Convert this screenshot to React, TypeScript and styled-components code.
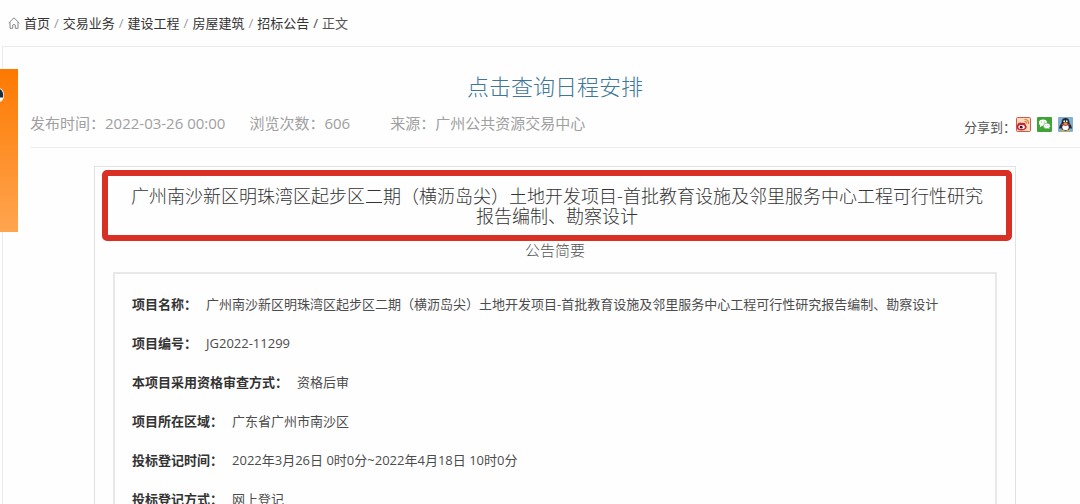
import React from "react";
import styled, { createGlobalStyle } from "styled-components";

const GlobalStyle = createGlobalStyle`
  *, *::before, *::after { box-sizing: border-box; }
  body {
    margin: 0;
    background: #fefefe;
    color: #555;
    font-family: "Open Sans", "Noto Sans CJK SC", sans-serif;
    font-size: 13px;
    overflow: hidden;
  }
`;

const Page = styled.div`
  height: 100vh;
  overflow: hidden;
`;

const Breadcrumb = styled.nav`
  display: flex;
  align-items: center;
  gap: 4px;
  height: 46px;
  padding: 0 8px;
  line-height: 20px;
`;

const Crumb = styled.a`
  color: #333;
  text-decoration: none;
`;

const Slash = styled.span<{ $dark?: boolean }>`
  color: ${(p) => (p.$dark ? "#444" : "#999")};
`;

const Panel = styled.main`
  margin-left: 2px;
  padding: 23px 0 0 27px;
  border: 1px solid #ebebeb;
  border-right: 0;
  min-height: 100vh;
`;

const Title = styled.h1`
  margin: 0;
  text-align: center;
  font-size: 22px;
  font-weight: 300;
  line-height: 32px;
`;

const TitleLink = styled.a`
  color: #3f7799;
  text-decoration: none;
`;

const MetaBar = styled.div`
  display: flex;
  justify-content: space-between;
  align-items: center;
  height: 46px;
  padding: 0 7px 4px 0;
  border-bottom: 1px solid #eee;
`;

const MetaList = styled.div`
  display: flex;
  color: #a0a0a0;
  font-size: 15px;
  line-height: 20px;
`;

const MetaItem = styled.span<{ $gap: number }>`
  margin-right: ${(p) => p.$gap}px;
`;

const Share = styled.div`
  display: flex;
  align-items: center;
  padding-top: 4px;
`;

const ShareLabel = styled.span`
  padding-top: 4px;
  line-height: 20px;
`;

const ShareIcons = styled.div`
  display: flex;
  gap: 6px;
`;

const ShareButton = styled.button`
  display: block;
  width: 15px;
  height: 15px;
  padding: 0;
  border: 0;
  background: none;
  cursor: pointer;
  svg { display: block; }
`;

const Notice = styled.article`
  margin: 18px 64px 0;
  padding: 3px 3px 0 7px;
  border: 1px solid #e2e2e2;
  border-bottom: 0;
`;

const Highlight = styled.div`
  padding: 10px 20px 9px;
  border: 6px solid #d93026;
  border-radius: 5px;
`;

const NoticeTitle = styled.h2`
  margin: 0;
  color: #333;
  text-align: center;
  font-size: 18px;
  font-weight: 300;
  line-height: 20px;
`;

const Subtitle = styled.h3`
  margin: 0;
  padding-right: 4px;
  text-align: center;
  font-size: 15px;
  font-weight: 300;
  line-height: 18px;
`;

const Summary = styled.dl`
  margin: 13px 15px 0 11px;
  padding: 11px 17px;
  border: 2px solid #e8e8e8;
`;

const Row = styled.div`
  display: flex;
  gap: 9px;
  line-height: 39px;
`;

const Term = styled.dt`
  color: #333;
  font-weight: 700;
`;

const Detail = styled.dd`
  margin: 0;
  color: #4c4c4c;
`;

const SideBanner = styled.aside`
  position: fixed;
  top: 69px;
  left: 0;
  width: 18px;
  height: 163px;
  overflow: hidden;
  background: linear-gradient(#fd7900, #ffa550);
`;

const projectName =
  "广州南沙新区明珠湾区起步区二期（横沥岛尖）土地开发项目-首批教育设施及邻里服务中心工程可行性研究报告编制、勘察设计";

const crumbs = ["首页", "交易业务", "建设工程", "房屋建筑", "招标公告"];

const rows = [
  ["项目名称：", projectName],
  ["项目编号：", "JG2022-11299"],
  ["本项目采用资格审查方式：", "资格后审"],
  ["项目所在区域：", "广东省广州市南沙区"],
  ["投标登记时间：", "2022年3月26日 0时0分~2022年4月18日 10时0分"],
  ["投标登记方式：", "网上登记"],
];

const HomeIcon = () => (
  <svg width="12" height="12" viewBox="0 0 12 12" fill="none" stroke="#888" strokeWidth="1" aria-hidden="true">
    <path d="M.7 6 6 .8 11.3 6M2 5v6.3h2.700V8.100Q6 6.600 7.300 8.100v3.200H10V5" />
  </svg>
);

const WeiboIcon = () => (
  <svg width="15" height="15" viewBox="0 0 15 15" aria-hidden="true">
    <rect x=".5" y=".5" width="14" height="14" rx="1" fill="#f8d9b8" stroke="#c95c4e" />
    <path d="M1 8Q3 4.500 6 6 9.500 5.200 9.800 8 12 10.500 9 12.600 6 14.300 2 12.800Q0 11 1 8Z" fill="#ca2636" />
    <ellipse cx="5.600" cy="10" rx="3.200" ry="2" fill="#fff" />
    <circle cx="5.200" cy="10.200" r="1.400" fill="#34171b" />
    <path d="M8.500 2.500Q13 2.500 12.500 7M8.500 4.600Q10.800 4.500 10.600 6.500" fill="none" stroke="#e77938" strokeWidth="1.100" />
  </svg>
);

const WechatIcon = () => (
  <svg width="15" height="15" viewBox="0 0 15 15" aria-hidden="true">
    <rect width="15" height="15" rx="1" fill="#40a337" />
    <path d="m3.300 8-.5 2.200L5 9Z" fill="#fff" />
    <ellipse cx="6" cy="5.800" rx="4" ry="3.300" fill="#fff" />
    <path d="m10.500 11 1.800 1.300-.3-2.300Z" fill="#fff" />
    <ellipse cx="9.800" cy="8.900" rx="3.500" ry="2.800" fill="#fff" stroke="#40a337" strokeWidth=".6" />
    <g fill="#40a337">
      <circle cx="4.700" cy="5" r=".5" /><circle cx="7.200" cy="5" r=".5" />
      <circle cx="8.700" cy="8.300" r=".4" /><circle cx="10.900" cy="8.300" r=".4" />
    </g>
  </svg>
);

const QqIcon = () => (
  <svg width="15" height="15" viewBox="0 0 15 15" aria-hidden="true">
    <rect width="15" height="15" rx="1" fill="#7fb1d0" />
    <path d="M3.500 6Q3.500 1 7.500 1t4 5q3 3.500 2 6l-1.600-1Q11 14 7.500 14T3.100 11l-1.600 1q-1-2.500 2-6Z" fill="#232a37" />
    <ellipse cx="7.500" cy="10.300" rx="3.200" ry="3" fill="#fff" />
    <ellipse cx="6.200" cy="4.300" rx=".8" ry="1.100" fill="#fff" />
    <ellipse cx="8.800" cy="4.300" rx=".8" ry="1.100" fill="#fff" />
    <ellipse cx="7.500" cy="6.300" rx="2.300" ry=".8" fill="#f6a21b" />
    <path d="M3.500 7.300Q7.500 9.300 11.500 7.300" fill="none" stroke="#d93b2d" strokeWidth="1.200" />
    <path d="M3 13.500h3.500M8.500 13.500H12" stroke="#f0a030" strokeWidth="1.300" />
  </svg>
);

export default function App() {
  return (
    <Page>
      <GlobalStyle />
      <Breadcrumb aria-label="当前位置">
        <HomeIcon />
        {crumbs.map((c, i) => (
          <React.Fragment key={c}>
            <Crumb href="#">{c}</Crumb>
            <Slash $dark={i === crumbs.length - 1}>/</Slash>
          </React.Fragment>
        ))}
        <span>正文</span>
      </Breadcrumb>
      <Panel>
        <Title>
          <TitleLink href="#">点击查询日程安排</TitleLink>
        </Title>
        <MetaBar>
          <MetaList>
            <MetaItem $gap={24}>发布时间：2022-03-26 00:00</MetaItem>
            <MetaItem $gap={40}>浏览次数：606</MetaItem>
            <MetaItem $gap={0}>来源：广州公共资源交易中心</MetaItem>
          </MetaList>
          <Share>
            <ShareLabel>分享到：</ShareLabel>
            <ShareIcons>
              <ShareButton type="button" aria-label="微博"><WeiboIcon /></ShareButton>
              <ShareButton type="button" aria-label="微信"><WechatIcon /></ShareButton>
              <ShareButton type="button" aria-label="QQ"><QqIcon /></ShareButton>
            </ShareIcons>
          </Share>
        </MetaBar>
        <Notice>
          <Highlight>
            <NoticeTitle>{projectName}</NoticeTitle>
          </Highlight>
          <Subtitle>公告简要</Subtitle>
          <Summary>
            {rows.map(([term, detail]) => (
              <Row key={term}>
                <Term>{term}</Term>
                <Detail>{detail}</Detail>
              </Row>
            ))}
          </Summary>
        </Notice>
      </Panel>
      <SideBanner>
        <svg width="18" height="60" viewBox="0 0 18 60" aria-hidden="true">
          <ellipse cx="-1" cy="26" rx="5" ry="7" fill="#fff" />
          <path d="M0 20Q4 22.500 3 28.500H0Z" fill="#1d2b3c" />
        </svg>
      </SideBanner>
    </Page>
  );
}
